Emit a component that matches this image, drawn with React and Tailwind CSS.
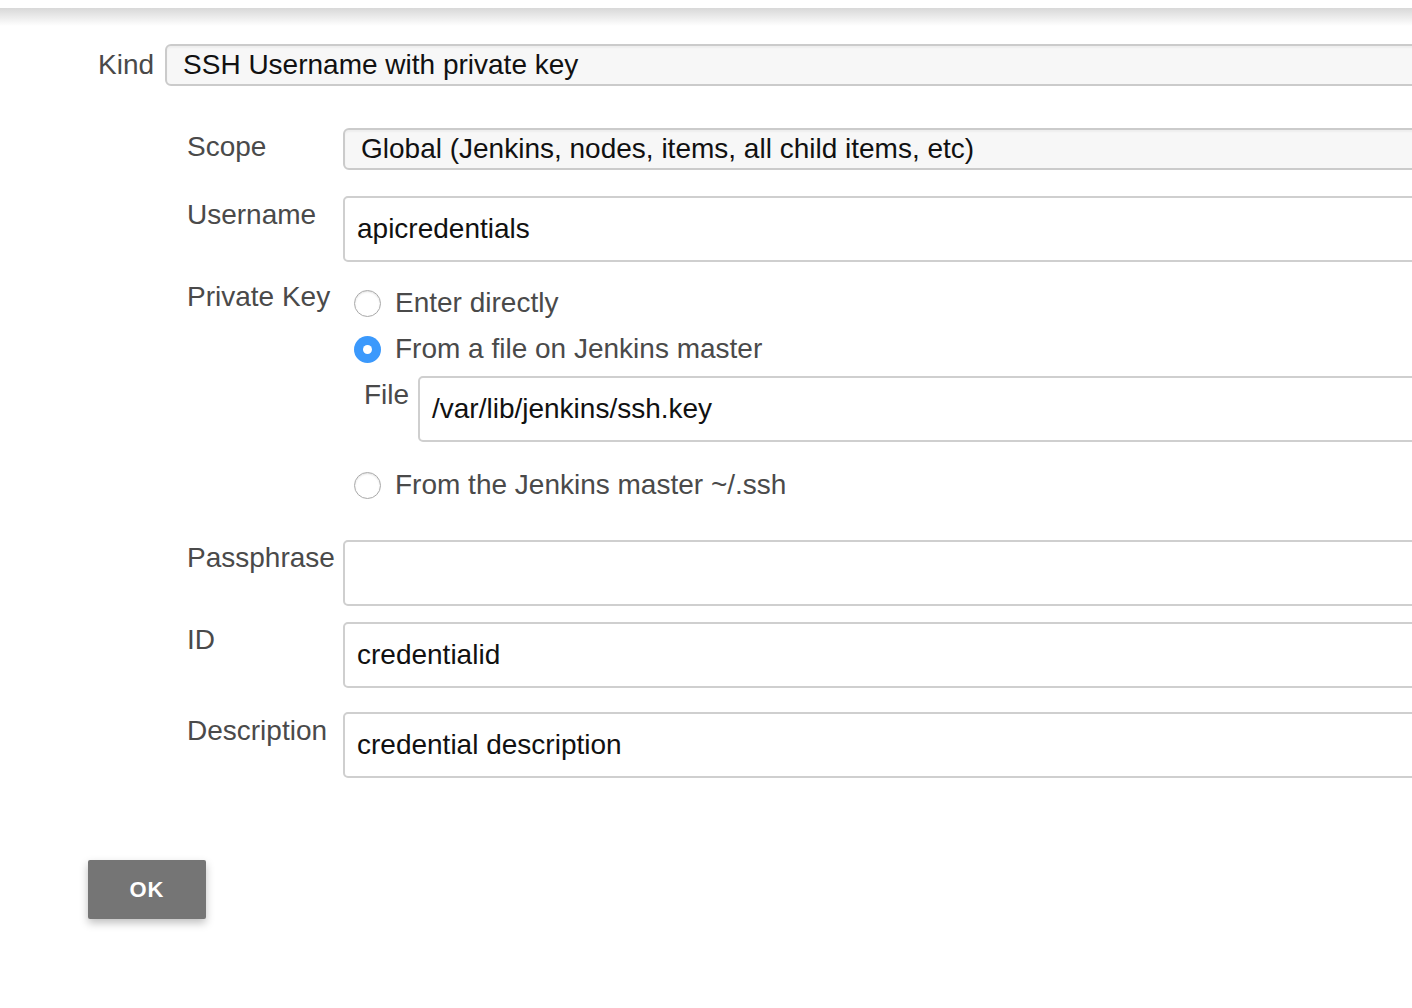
import React from 'react';

const font = { fontFamily: '"Liberation Sans", Arial, Helvetica, sans-serif' };

const Label = ({ children, className = '' }) => (
  <div className={`w-[156px] shrink-0 text-[28px] leading-[32px] text-[#4a4a4a] ${className}`}>{children}</div>
);

const Select = ({ value }) => (
  <div className="flex-1 mr-[-20px] h-[42px] flex items-center pl-[16px] bg-[#f7f7f7] border-2 border-[#cbcbcb] rounded-[6px] shadow-[inset_0_2px_2px_rgba(0,0,0,0.04)] text-[28px] text-[#111]">
    {value}
  </div>
);

const Input = ({ value }) => (
  <div className="flex-1 mr-[-20px] h-[66px] flex items-center pl-[12px] bg-white border-2 border-[#cfcfcf] rounded-[5px] text-[28px] text-[#111]">
    {value}
  </div>
);

const Radio = ({ checked, label }) => (
  <div className="h-[46px] flex items-center">
    {checked ? (
      <span className="w-[27px] h-[27px] rounded-full bg-[#3b99fc] flex items-center justify-center">
        <span className="w-[9px] h-[9px] rounded-full bg-white" />
      </span>
    ) : (
      <span className="w-[27px] h-[27px] rounded-full bg-white border-[1.5px] border-[#a9a9a9] shadow-[inset_0_1px_2px_rgba(0,0,0,0.12)]" />
    )}
    <span className="ml-[14px] text-[28px] text-[#4a4a4a]">{label}</span>
  </div>
);

export default function App() {
  return (
    <div className="w-full min-h-[1008px] bg-white overflow-hidden" style={font}>
      <div className="h-[8px] bg-white" />
      <div className="h-[18px] bg-gradient-to-b from-[#d8d8d8] to-white" />

      <div className="mt-[18px] flex items-center pl-[98px]">
        <div className="text-[28px] leading-[32px] text-[#4a4a4a] mr-[11px]">Kind</div>
        <Select value="SSH Username with private key" />
      </div>

      <div className="pl-[187px] mt-[42px]">
        <div className="flex items-start">
          <Label className="pt-[3px]">Scope</Label>
          <Select value="Global (Jenkins, nodes, items, all child items, etc)" />
        </div>

        <div className="flex items-start mt-[26px]">
          <Label className="pt-[3px]">Username</Label>
          <Input value="apicredentials" />
        </div>

        <div className="flex items-start mt-[18px]">
          <Label className="pt-[1px]">Private Key</Label>
          <div className="flex-1 pl-[11px]">
            <Radio label="Enter directly" />
            <Radio checked label="From a file on Jenkins master" />
            <div className="flex items-start mt-[4px] ml-[10px]">
              <div className="w-[54px] shrink-0 text-[28px] leading-[32px] text-[#4a4a4a] pt-[3px]">File</div>
              <Input value="/var/lib/jenkins/ssh.key" />
            </div>
            <div className="mt-[20px]">
              <Radio label="From the Jenkins master ~/.ssh" />
            </div>
          </div>
        </div>

        <div className="flex items-start mt-[32px]">
          <Label className="pt-[2px]">Passphrase</Label>
          <Input value="" />
        </div>

        <div className="flex items-start mt-[16px]">
          <Label className="pt-[2px]">ID</Label>
          <Input value="credentialid" />
        </div>

        <div className="flex items-start mt-[24px]">
          <Label className="pt-[3px]">Description</Label>
          <Input value="credential description" />
        </div>
      </div>

      <div className="pl-[88px] mt-[82px]">
        <button className="w-[118px] h-[59px] bg-[#757575] rounded-[2px] text-white text-[22px] font-bold tracking-[1px] shadow-[0_4px_8px_rgba(0,0,0,0.25)]">
          OK
        </button>
      </div>
    </div>
  );
}
